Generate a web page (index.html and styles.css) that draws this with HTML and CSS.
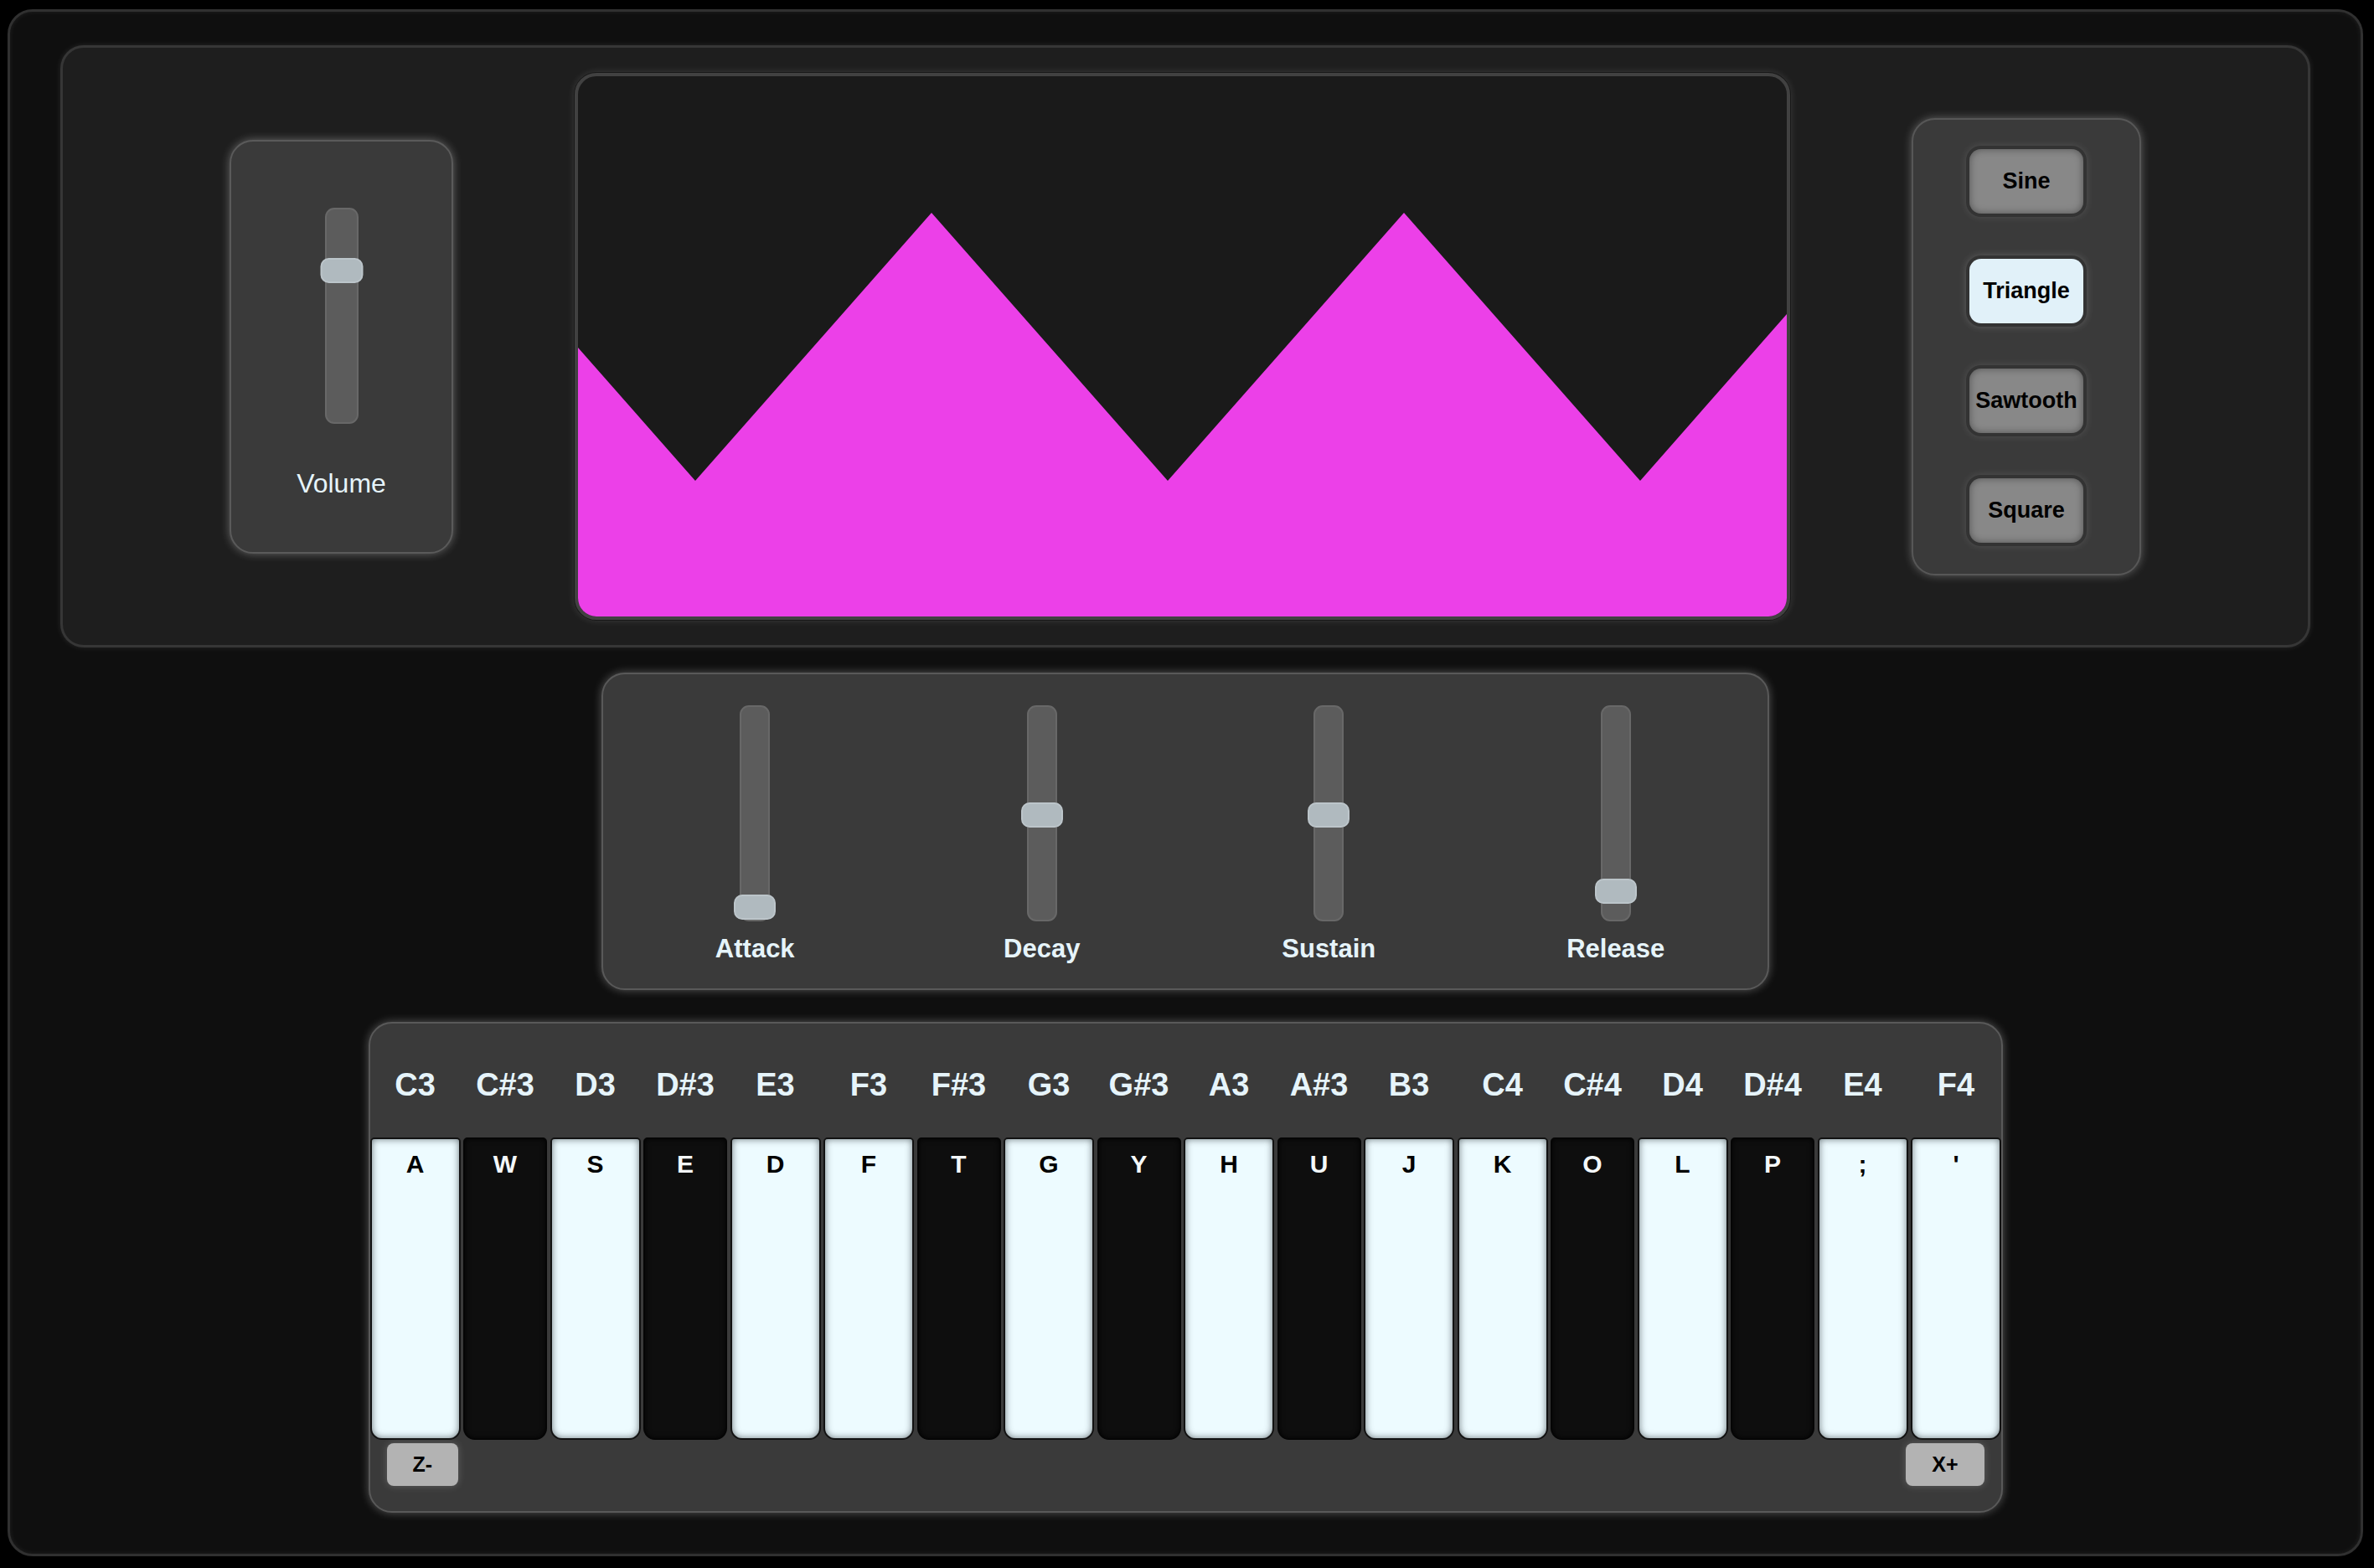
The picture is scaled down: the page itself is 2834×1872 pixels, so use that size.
FILE: index.html
```html
<!DOCTYPE html>
<html>
<head>
<meta charset="utf-8">
<link rel="stylesheet" href="styles.css">
</head>
<body>
<div class="synth">
  <section class="top-panel">
    <div class="volume-box">
      <div class="track vol-track"><div class="thumb" style="top:58px"></div></div>
      <div class="vol-label">Volume</div>
    </div>
    <div class="display">
      <svg class="wave" viewBox="0 0 1443 645" preserveAspectRatio="none">
        <polygon fill="#ec40e8" points="0,324 140,483 422,163 704,483 986,163 1268,483 1443,284 1443,645 0,645"/>
      </svg>
    </div>
    <div class="wave-box">
      <button class="wave-btn">Sine</button>
      <button class="wave-btn active">Triangle</button>
      <button class="wave-btn">Sawtooth</button>
      <button class="wave-btn">Square</button>
    </div>
  </section>

  <section class="adsr">
    <div class="adsr-col">
      <div class="track adsr-track"><div class="thumb adsr-thumb" style="top:224px"></div></div>
      <div class="adsr-label">Attack</div>
    </div>
    <div class="adsr-col">
      <div class="track adsr-track"><div class="thumb adsr-thumb" style="top:114px"></div></div>
      <div class="adsr-label">Decay</div>
    </div>
    <div class="adsr-col">
      <div class="track adsr-track"><div class="thumb adsr-thumb" style="top:114px"></div></div>
      <div class="adsr-label">Sustain</div>
    </div>
    <div class="adsr-col">
      <div class="track adsr-track"><div class="thumb adsr-thumb" style="top:205px"></div></div>
      <div class="adsr-label">Release</div>
    </div>
  </section>

  <section class="keyboard">
    <div class="note-row">
      <span class="note w">C3</span><span class="note b">C#3</span><span class="note w">D3</span><span class="note b">D#3</span><span class="note w">E3</span><span class="note w">F3</span><span class="note b">F#3</span><span class="note w">G3</span><span class="note b">G#3</span><span class="note w">A3</span><span class="note b">A#3</span><span class="note w">B3</span><span class="note w">C4</span><span class="note b">C#4</span><span class="note w">D4</span><span class="note b">D#4</span><span class="note w">E4</span><span class="note w">F4</span>
    </div>
    <div class="key-row">
      <div class="key white">A</div><div class="key black">W</div><div class="key white">S</div><div class="key black">E</div><div class="key white">D</div><div class="key white">F</div><div class="key black">T</div><div class="key white">G</div><div class="key black">Y</div><div class="key white">H</div><div class="key black">U</div><div class="key white">J</div><div class="key white">K</div><div class="key black">O</div><div class="key white">L</div><div class="key black">P</div><div class="key white">;</div><div class="key white">'</div>
    </div>
    <div class="octave-row">
      <button class="oct-btn">Z-</button>
      <button class="oct-btn">X+</button>
    </div>
  </section>
</div>
</body>
</html>
```
FILE: styles.css
```css
* { box-sizing: border-box; }
html, body { margin: 0; padding: 0; }
body {
  background: #000;
  width: 2834px;
  height: 1872px;
  font-family: "Liberation Sans", Arial, Helvetica, sans-serif;
  overflow: hidden;
}
.synth {
  margin: 11px 13px 0 9px;
  height: 1847px;
  background: #0f0f0f;
  border: 3px solid #303030;
  border-radius: 30px;
  box-shadow: inset 0 0 6px rgba(255,255,255,0.08);
  display: flex;
  flex-direction: column;
  align-items: center;
}
.top-panel {
  margin-top: 40px;
  width: 2686px;
  height: 719px;
  background: #1e1e1e;
  border: 3px solid #363636;
  border-radius: 28px;
  box-shadow: 0 0 7px rgba(255,255,255,0.1);
  display: flex;
  align-items: center;
  justify-content: center;
  gap: 145px;
}
.volume-box {
  width: 267px;
  height: 494px;
  background: #3a3a3a;
  border: 2px solid #5a5a5a;
  border-radius: 28px;
  box-shadow: 0 0 11px rgba(255,255,255,0.32);
  display: flex;
  flex-direction: column;
  align-items: center;
  padding-top: 79px;
}
.track {
  position: relative;
  background: #5c5c5c;
  border: 2px solid #686868;
  border-radius: 11px;
}
.vol-track { width: 40px; height: 258px; }
.thumb {
  position: absolute;
  left: 50%;
  transform: translateX(-50%);
  width: 51px;
  height: 30px;
  background: #b0babf;
  border: 2px solid #bcc5ca;
  border-radius: 10px;
}
.vol-label {
  margin-top: 55px;
  font-size: 32px;
  line-height: 1;
  color: #e6f4fa;
}
.display {
  width: 1451px;
  height: 653px;
  background: #1a1a1a;
  border: 4px solid #414141;
  border-radius: 26px;
  overflow: hidden;
  box-shadow: 0 0 0 1px #181818, 0 0 10px rgba(255,255,255,0.16);
}
.wave { display: block; width: 100%; height: 100%; }
.wave-box {
  width: 274px;
  height: 546px;
  background: #3a3a3a;
  border: 2px solid #575757;
  border-radius: 28px;
  box-shadow: 0 0 11px rgba(255,255,255,0.3);
  display: flex;
  flex-direction: column;
  align-items: center;
  padding-top: 35px;
  gap: 54px;
}
.wave-btn {
  width: 136px;
  height: 77px;
  padding: 0;
  border: none;
  border-radius: 14px;
  background: #888;
  box-shadow: inset 0 0 10px rgba(0,0,0,0.4), 0 0 0 4px #333, 0 0 10px 4px rgba(255,255,255,0.12);
  font-family: "Liberation Sans", Arial, Helvetica, sans-serif;
  font-weight: bold;
  font-size: 27px;
  color: #000;
}
.wave-btn.active {
  background: #e1f1f9;
  box-shadow: 0 0 0 4px #333, 0 0 10px 4px rgba(255,255,255,0.18);
}
.adsr {
  margin-top: 30px;
  width: 1394px;
  height: 379px;
  background: #3a3a3a;
  border: 2px solid #595959;
  border-radius: 28px;
  box-shadow: 0 0 11px rgba(255,255,255,0.3);
  display: grid;
  grid-template-columns: repeat(4, 1fr);
  padding: 37px 10px 0;
}
.adsr-col {
  display: flex;
  flex-direction: column;
  align-items: center;
}
.adsr-track { width: 36px; height: 258px; }
.adsr-thumb { width: 50px; }
.adsr-label {
  margin-top: 17px;
  font-size: 31px;
  font-weight: bold;
  line-height: 1;
  color: #e6f4fa;
}
.keyboard {
  margin-top: 38px;
  width: 1951px;
  height: 586px;
  background: #3a3a3a;
  border: 2px solid #595959;
  border-radius: 28px;
  box-shadow: 0 0 11px rgba(255,255,255,0.3);
  padding-top: 54px;
}
.note-row, .key-row {
  display: flex;
  gap: 3.5px;
}
.note {
  font-size: 38px;
  font-weight: bold;
  line-height: 1;
  color: #e6f4fa;
  text-align: center;
  white-space: nowrap;
}
.note.w, .key.white { width: 108px; flex: none; }
.note.b, .key.black { width: 100px; flex: none; }
.key-row { margin-top: 44px; }
.key {
  height: 361px;
  border: 2px solid #121212;
  border-radius: 5px 5px 14px 14px;
  text-align: center;
  font-size: 30px;
  font-weight: bold;
  line-height: 1;
  padding-top: 15px;
}
.key.white {
  background: #edfbff;
  color: #000;
  box-shadow: inset 0 0 9px rgba(55,65,70,0.7);
}
.key.black {
  background: #0e0e0e;
  color: #f4f8fa;
  border-color: #050505;
  box-shadow: inset 0 0 6px rgba(0,0,0,0.8);
}
.octave-row {
  margin-top: 4px;
  display: flex;
  justify-content: space-between;
  padding: 0 20px;
}
.oct-btn {
  height: 51px;
  padding: 0 31px;
  border: none;
  border-radius: 8px;
  background: #b3b3b3;
  box-shadow: 0 0 10px rgba(255,255,255,0.2);
  font-family: "Liberation Sans", Arial, Helvetica, sans-serif;
  font-weight: bold;
  font-size: 25px;
  color: #000;
}
```
